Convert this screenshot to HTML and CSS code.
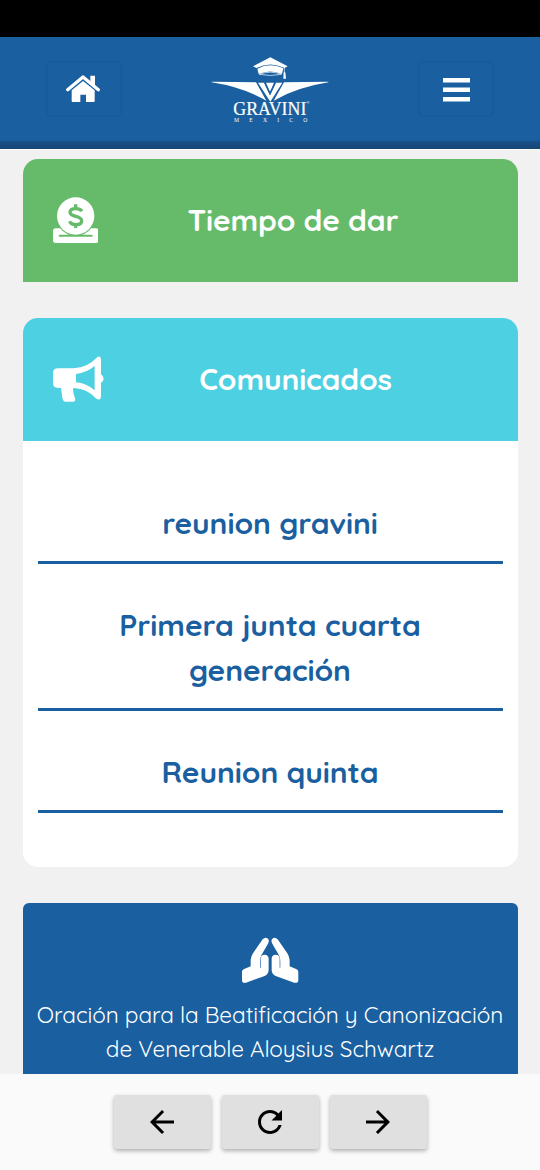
FILE: index.html
```
<!DOCTYPE html>
<html lang="es">
<head>
	<meta charset="utf-8">
	<meta name="viewport" content="width=device-width, initial-scale=1">
	<title>Gravini</title>
	<link rel="stylesheet" href="styles.css">
</head>
<body>
	<div class="statusbar"></div>
	<header class="navbar">
		<button class="nav-btn" aria-label="Inicio">
			<svg class="icon-home" viewBox="195 165 110 90">
				<path d="M203 212L249 174L295 212" fill="none" stroke="#fff" stroke-width="10" stroke-linecap="round" stroke-linejoin="round"/>
				<path d="M271 170H285V202L271 190Z"/>
				<path d="M215 214L249 186L284 214V246Q284 249 281 249H258V227H241V249H218Q215 249 215 246Z"/>
			</svg>
		</button>
		<svg class="logo" viewBox="0 0 420 270">
			<path d="M159 64L211 37L263 64L254 69Q211 48 169 69Z"/>
			<path d="M172 71Q211 51 250 70L246 87Q211 72 176 87Z"/>
			<path d="M178 88Q211 75 244 88Q211 95 178 88Z" fill="none" stroke="#fff" stroke-width="2"/>
			<path d="M253 68V83" stroke="#fff" stroke-width="2"/>
			<path d="M251 82H256L258 101H250Z"/>
			<path d="M35 110L168 112L199 167Q130 127 35 112Z"/>
			<path d="M385 110L252 112L221 167Q290 127 385 112Z"/>
			<path d="M174 113H193L210 150L227 113H247L211 170Z"/>
			<path d="M198 113H222L210 140Z"/>
			<path d="M194 113L210 147L226 113" fill="none" stroke="#1a5fa0" stroke-width="4"/>
			<text class="logo-name" x="100" y="210" textLength="219" lengthAdjust="spacingAndGlyphs">GRAVINI</text>
			<text class="logo-reg" x="319" y="176">®</text>
			<text class="logo-country" x="102" y="231" textLength="220">MEXICO</text>
		</svg>
		<button class="nav-btn" aria-label="Menu">
			<svg class="icon-bars" viewBox="0 0 27 24">
				<path d="M0 0H27V4.6H0ZM0 9.5H27V14H0ZM0 19H27V23.6H0Z"/>
			</svg>
		</button>
	</header>

	<main class="content">
		<section class="card">
			<div class="card-header green">
				<svg class="icon-donate" viewBox="97 138 137 145">
					<rect x="97" y="235" width="137" height="44" rx="8"/>
					<path d="M118 235A60 60 0 0 0 212 235Z" fill="#66bb6a"/>
					<path d="M117 257H213" stroke="#66bb6a" stroke-width="6" stroke-linecap="round"/>
					<circle cx="165" cy="198" r="56"/>
					<path d="M183 184Q180 176 166 176Q148 176 148 187Q148 195 165 199Q183 203 183 213Q183 224 166 224Q150 224 147 214M165 163V176M165 224V234" fill="none" stroke="#66bb6a" stroke-width="10"/>
				</svg>
				<h2 class="card-title">Tiempo de dar</h2>
			</div>
		</section>

		<section class="card">
			<div class="card-header cyan">
				<svg class="icon-horn" viewBox="97 133 153 145">
					<path d="M112 173H165V232H158Q155 240 163 262Q166 273 157 273H135Q127 273 125 262L121 232H112Q97 232 97 218V187Q97 173 112 173Z"/>
					<path fill-rule="evenodd" d="M160 173Q200 171 227 142Q240 132 241 146V258Q240 271 227 264Q200 234 160 232ZM166 190V215Q198 218 222 239V166Q198 186 166 190Z"/>
					<path d="M240 190Q249 196 249 204Q249 212 240 218Z"/>
				</svg>
				<h2 class="card-title">Comunicados</h2>
			</div>
			<div class="card-body">
				<a class="notice">reunion gravini</a>
				<a class="notice">Primera junta cuarta generación</a>
				<a class="notice">Reunion quinta</a>
			</div>
		</section>

		<section class="prayer">
			<svg class="icon-hands" viewBox="60 50 181 145">
				<g id="hand">
					<path d="M92 141V122Q93 111 99 102L128 60Q136 51 144 58Q149 64 144 73L124 108Q120 116 120 125V160L78 190Q66 193 66 182V157Q66 152 71 150Z"/>
					<path d="M122 118Q122 106 134 106Q146 107 146 118V152Q146 165 132 171L78 190L105 145H122Z"/>
				</g>
				<use href="#hand" transform="translate(301 0) scale(-1 1)"/>
			</svg>
			<p class="prayer-text">Oración para la Beatificación y Canonización de Venerable Aloysius Schwartz</p>
		</section>
	</main>

	<footer class="toolbar">
		<button class="tool-btn" aria-label="Atrás">
			<svg viewBox="0 0 24 24"><path d="M20 11H7.83l5.59-5.59L12 4l-8 8 8 8 1.41-1.41L7.83 13H20v-2z"/></svg>
		</button>
		<button class="tool-btn" aria-label="Recargar">
			<svg viewBox="0 0 24 24"><path d="M17.65 6.35C16.2 4.9 14.21 4 12 4c-4.42 0-7.99 3.58-7.99 8s3.57 8 7.99 8c3.73 0 6.84-2.55 7.73-6h-2.08c-.82 2.33-3.04 4-5.65 4-3.31 0-6-2.69-6-6s2.69-6 6-6c1.66 0 3.14.69 4.22 1.78L13 11h7V4l-2.35 2.35z"/></svg>
		</button>
		<button class="tool-btn" aria-label="Adelante">
			<svg viewBox="0 0 24 24"><path d="M12 4l-1.41 1.41L16.17 11H4v2h12.17l-5.58 5.59L12 20l8-8z"/></svg>
		</button>
	</footer>
</body>
</html>
```
FILE: styles.css
```
*{
	box-sizing: border-box;
}
body{
	margin: 0;
	height: 1170px;
	display: flex;
	flex-direction: column;
	overflow: hidden;
	background-color: #f1f1f1;
	font-family: Quicksand, Lato, sans-serif;
}
button{
	padding: 0;
	border: none;
	font: inherit;
}
svg{
	display: block;
	flex: none;
	fill: white;
}
.statusbar{
	flex: none;
	height: 37px;
	background-color: black;
}
.navbar{
	flex: none;
	display: flex;
	justify-content: space-between;
	height: 112px;
	padding: 24px 46px 0 46px;
	background: linear-gradient(#1a5fa0 103px, #184f86 105px, #164674 112px);
}
.nav-btn{
	display: flex;
	align-items: center;
	justify-content: center;
	width: 76px;
	height: 56px;
	background: none;
	border: 2px solid #195b9b;
	border-radius: 5px;
}
.icon-home{
	width: 36.7px;
	height: 30px;
	margin-right: 2px;
}
.icon-bars{
	width: 27px;
	height: 24px;
	margin-top: 2px;
}
.logo{
	width: 140px;
	height: 90px;
	margin-top: -16px;
}
.logo-name{
	font-family: "Liberation Serif", serif;
	font-size: 54px;
	stroke: white;
	stroke-width: .6px;
}
.logo-reg{
	font-family: "Liberation Sans", sans-serif;
	font-size: 13px;
}
.logo-country{
	font-family: "Liberation Serif", serif;
	font-size: 17px;
}
.content{
	flex: 1;
	min-height: 0;
	overflow: hidden;
	display: flex;
	flex-direction: column;
	gap: 36px;
	padding: 9px 22.5px 0;
	border-top: 1px solid #fdfdfd;
}
.card{
	flex: none;
}
.card-header{
	display: flex;
	align-items: center;
	height: 123px;
	padding: 0 30px;
	border-radius: 15px 15px 0 0;
	color: white;
}
.green{
	background-color: #66bb6a;
}
.cyan{
	background-color: #4dd0e1;
}
.icon-donate{
	width: 45.7px;
	height: 48.3px;
}
.icon-horn{
	width: 51px;
	height: 48.3px;
}
.card-title{
	flex: 1;
	margin: 0;
	font-size: 30px;
	line-height: 45px;
	font-weight: 700;
	letter-spacing: -.15px;
	text-align: center;
}
.card-body{
	height: 426px;
	padding: 20px 15px 0;
	background-color: white;
	border-radius: 0 0 15px 15px;
}
.notice{
	display: block;
	padding: 40px 60px 15px;
	border-bottom: 3px solid #1a5fa0;
	color: #1a5fa0;
	font-size: 30px;
	line-height: 45px;
	font-weight: 700;
	letter-spacing: -.08px;
	text-align: center;
}
.notice + .notice{
	padding-top: 39px;
}
.prayer{
	flex: none;
	height: 190px;
	padding-top: 33px;
	background-color: #1a5fa0;
	border-radius: 6px;
	color: white;
}
.icon-hands{
	width: 60.3px;
	height: 48.3px;
	margin: 0 auto;
}
.prayer-text{
	margin: 14.2px 0 0;
	padding: 0 10px;
	font-size: 22.5px;
	line-height: 33.75px;
	letter-spacing: -.06px;
	text-align: center;
}
.toolbar{
	flex: none;
	display: flex;
	justify-content: center;
	gap: 11px;
	height: 96px;
	padding-top: 21px;
	background-color: #fafafa;
}
.tool-btn{
	display: flex;
	align-items: center;
	justify-content: center;
	width: 97px;
	height: 54px;
	background-color: #e0e0e0;
	border-radius: 3px;
	box-shadow: 0 2px 4px rgba(0,0,0,.3);
}
.tool-btn svg{
	width: 36px;
	height: 36px;
	fill: black;
}
```
